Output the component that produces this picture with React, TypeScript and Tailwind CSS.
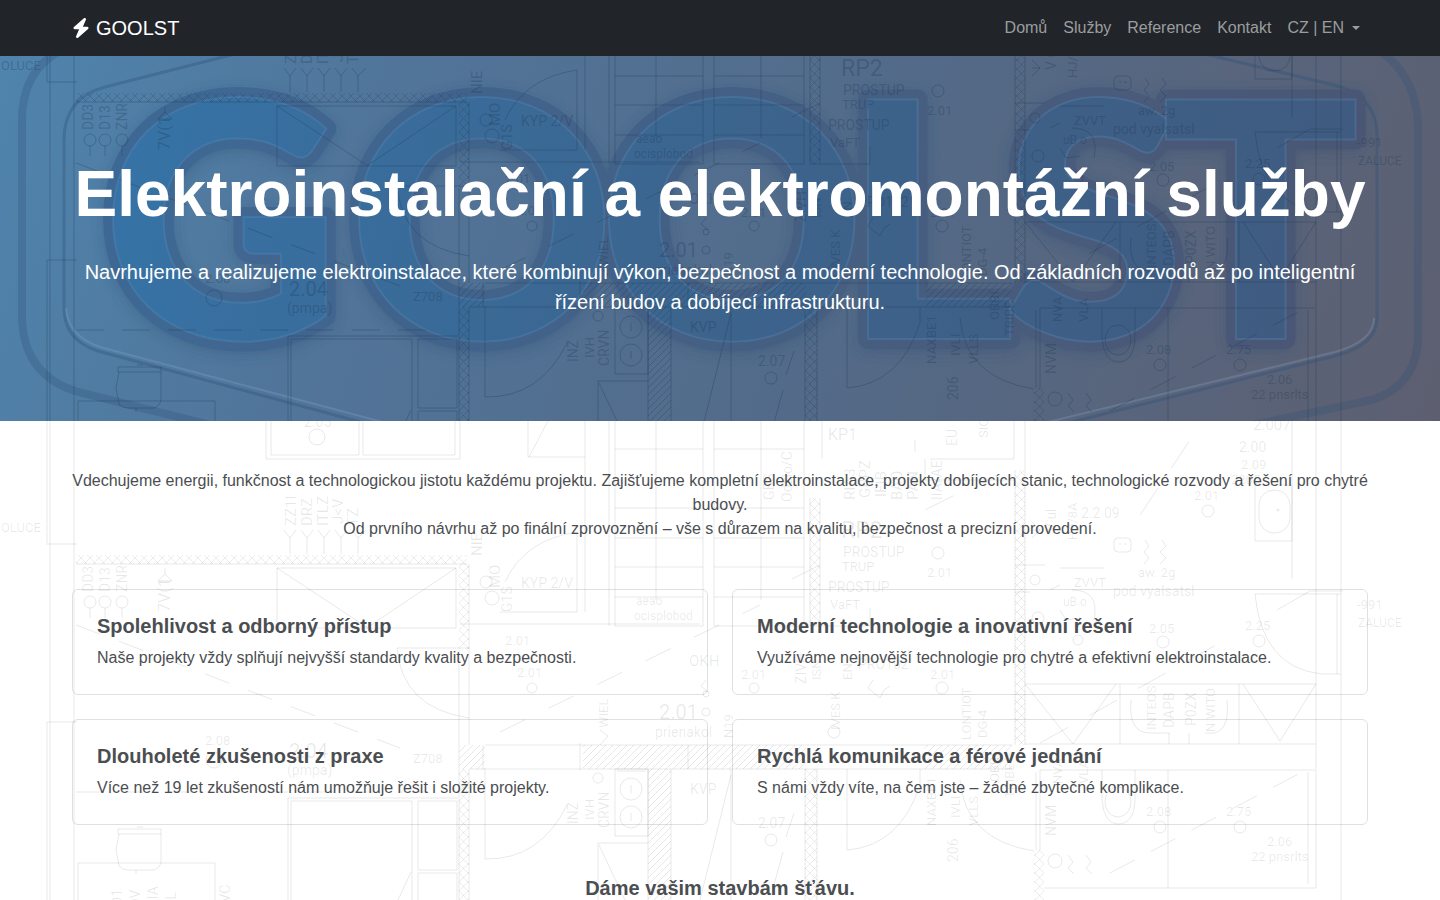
import React from "react";
import { FaBolt } from "react-icons/fa6";

const navLinks = [
  { label: "Domů", href: "#domu" },
  { label: "Služby", href: "#sluzby" },
  { label: "Reference", href: "#reference" },
  { label: "Kontakt", href: "#kontakt" },
];

const features = [
  {
    title: "Spolehlivost a odborný přístup",
    text: "Naše projekty vždy splňují nejvyšší standardy kvality a bezpečnosti.",
  },
  {
    title: "Moderní technologie a inovativní řešení",
    text: "Využíváme nejnovější technologie pro chytré a efektivní elektroinstalace.",
  },
  {
    title: "Dlouholeté zkušenosti z praxe",
    text: "Více než 19 let zkušeností nám umožňuje řešit i složité projekty.",
  },
  {
    title: "Rychlá komunikace a férové jednání",
    text: "S námi vždy víte, na čem jste – žádné zbytečné komplikace.",
  },
];

// x, y, size, text
const labels: [number, number, number, string][] = [
  [1, 532, 13, "OLUCE"],
  [304, 427, 14, "2.05"],
  [521, 588, 14, "KYP 2/V"],
  [636, 605, 12, "aeao"],
  [634, 620, 12, "ocisplobod"],
  [828, 440, 16, "KP1"],
  [841, 538, 23, "RP2"],
  [843, 557, 14, "PROSTUP"],
  [842, 571, 13, "TRUP"],
  [828, 592, 14, "PROSTUP"],
  [830, 609, 13, "VaFT"],
  [927, 577, 13, "2.01"],
  [505, 645, 13, "2.01"],
  [517, 677, 13, "2.01"],
  [741, 679, 13, "2.01"],
  [930, 679, 13, "2.01"],
  [689, 666, 15, "OKH"],
  [858, 669, 14, "PRO102"],
  [659, 719, 20, "2.01"],
  [655, 737, 14, "prienakol"],
  [690, 794, 14, "KVP"],
  [758, 828, 14, "2.07"],
  [205, 745, 13, "2.08"],
  [289, 758, 20, "2.04"],
  [287, 775, 14, "(pmpa)"],
  [413, 763, 13, "Z708"],
  [1253, 430, 15, "2.007"],
  [1239, 452, 14, "2.00"],
  [1241, 469, 13, "2.09"],
  [1231, 484, 13, "2205"],
  [1194, 500, 13, "2.01"],
  [1081, 518, 14, "2.2 09"],
  [1074, 587, 13, "ZVVT"],
  [1063, 606, 12, "uB o"],
  [1138, 577, 13, "aw. 2g"],
  [1113, 596, 14, "pod vyalsatsl"],
  [1149, 633, 13, "2.05"],
  [1245, 630, 13, "2.25"],
  [1357, 609, 13, "-991"],
  [1358, 627, 12, "ZALUCE"],
  [1146, 816, 13, "2.08"],
  [1226, 816, 13, "2.75"],
  [1267, 846, 13, "2.06"],
  [1251, 861, 13, "22 pnsrlts"],
];

// x, y, size, text of the labels that run up the sheet
const sideLabels: [number, number, number, string][] = [
  [296, 526, 15, "ZZ1I"],
  [312, 526, 15, "DRZ"],
  [328, 526, 15, "ITLZ"],
  [343, 524, 15, "J<V"],
  [358, 526, 15, "TZ"],
  [93, 592, 14, "DD3"],
  [110, 592, 14, "D13"],
  [127, 592, 14, "ZNR"],
  [170, 612, 16, "7V(1"],
  [482, 556, 15, "NIE"],
  [500, 588, 15, "MO"],
  [512, 612, 14, "G1S"],
  [792, 502, 14, "Odzlo/C"],
  [774, 500, 14, "GBS"],
  [855, 500, 15, "RIA3"],
  [870, 498, 15, "GBPZ"],
  [886, 497, 15, "IEIB"],
  [902, 500, 15, "BAO"],
  [918, 500, 15, "PAN"],
  [942, 500, 14, "IIA/AE"],
  [957, 446, 14, "EU"],
  [988, 438, 13, "SIO"],
  [608, 728, 13, "WIEL"],
  [733, 738, 13, "N19"],
  [806, 684, 14, "ZIVH"],
  [821, 680, 13, "ISN"],
  [840, 730, 13, "IVES K"],
  [852, 680, 13, "EN"],
  [971, 740, 13, "LONTIOT"],
  [987, 738, 13, "DG-4"],
  [578, 824, 14, "INZ"],
  [594, 820, 13, "IVH"],
  [609, 828, 14, "CRVN"],
  [936, 826, 13, "NAXBE1"],
  [958, 862, 14, "206"],
  [960, 818, 13, "IVLI"],
  [978, 826, 13, "VLLS"],
  [999, 782, 13, "OBBI"],
  [1014, 798, 13, "TRIBE"],
  [1056, 532, 14, "V ul"],
  [1077, 540, 13, "HJ/8A"],
  [1156, 730, 13, "INTEOS"],
  [1174, 728, 14, "DAPB"],
  [1196, 726, 14, "P0ZX"],
  [1215, 732, 13, "N WITO"],
  [1056, 836, 14, "NVM"],
  [1062, 784, 13, "NVA"],
  [1088, 784, 13, "VLA"],
  [122, 906, 14, "D1"],
  [140, 908, 14, "OV"],
  [158, 908, 14, "BIA"],
  [176, 908, 14, "TL"],
  [230, 912, 14, "OVC"],
];

const circles: [number, number, number][] = [
  [317, 437, 8],
  [214, 760, 8],
  [532, 688, 5],
  [754, 688, 5],
  [942, 688, 6],
  [598, 778, 5],
  [631, 789, 11],
  [631, 817, 11],
  [771, 840, 6],
  [1208, 511, 6],
  [1163, 642, 6],
  [1259, 641, 6],
  [1160, 827, 6],
  [1240, 827, 6],
  [1055, 861, 7],
  [938, 553, 6],
  [90, 602, 6],
  [105, 602, 6],
  [122, 602, 6],
  [706, 694, 3],
  [706, 712, 4],
  [486, 582, 6],
  [492, 598, 7],
  [834, 732, 6],
  [1038, 618, 6],
  [1035, 580, 5],
  [1078, 640, 5],
];

const Blueprint = ({ id, viewBox, className }: { id: string; viewBox: string; className: string }) => {
  return (
    <svg
      viewBox={viewBox}
      preserveAspectRatio="xMidYMin slice"
      className={`pointer-events-none absolute inset-0 h-full w-full ${className}`}
      fill="none"
      stroke="currentColor"
      aria-hidden="true"
    >
      <defs>
        <pattern id={`${id}-hatch`} width="7" height="7" patternUnits="userSpaceOnUse">
          <path d="M-1 8L8 -1M-1 1L1 -1M6 8L8 6" />
        </pattern>
        <pattern id={`${id}-cross`} width="9" height="9" patternUnits="userSpaceOnUse">
          <path d="M0 0L9 9M9 0L0 9" strokeWidth="0.8" />
        </pattern>
      </defs>

      {/* walls */}
      <g stroke="none">
        <path d="M76 555H467V564H76zM459 564H469V650H459zM810 498H820V626H810zM1015 470H1025V745H1015z" fill={`url(#${id}-cross)`} />
        <path d="M459 769H469V960H459zM805 769H817V960H805zM1034 850H1044V960H1034z" fill={`url(#${id}-cross)`} />
        <path d="M459 745H485V769H459zM583 745H806V769H583zM925 745H1012V769H925zM648 769H671V960H648z" fill={`url(#${id}-hatch)`} />
      </g>
      <path d="M50 421V960M74 421V960M47 421V545M48 544H77M47 960V722H77" />
      <path d="M76 564H467M469 564V745M459 650V960M469 769V960M460 624H700M585 421V612M577 532V612H500M609 421V626" />
      <path d="M485 745H1012M470 769H1012M483 745V769M580 743V770M688 745V769M648 769V960M671 769V960M805 769V960M817 769V960" />
      <path d="M810 498V626H870V608M820 498V626M822 421V459M1015 470V745M1025 421V745M1014 421V459H930M925 459V480H1014" />
      <path d="M1292 421V579M1316 421V769M1341 421V960M1255 594H1341M1255 594Q1262 668 1322 674H1341M1337 594V674M1277 610L1310 591H1343" />

      {/* rooms and furniture */}
      <path d="M266 421V459H460V421M271 421V455H359V421M363 421V455H455V421" />
      <path d="M277 568H456V628H277zM277 568L368 628M456 568L368 627" />
      <path d="M288 960V798H458M291 960V801H412V960M418 801H457V870H418zM418 960V873H457V960M411 872L398 900" />
      <path d="M118 829H161V834H118zM119 834L116 850L119 866Q122 870 128 870H154Q160 868 161 862V834M137 827H143M136 870V874" />
      <path d="M78 960V863H215V960" />
      <path d="M397 648H470M397 648Q402 708 469 718" />
      <path d="M528 421V457H585M529 457L548 421M505 582Q524 540 577 532" />
      <path d="M615 421V626M656 421V600M703 421V626M714 421V626M761 421V600M804 421V626" />
      <path d="M615 449H703M714 449H804M615 508H703M714 508H804M615 538H703M714 538H804M615 567H703M714 567H804M615 597H703M714 597H804M615 626H703M714 626H804" />
      <path d="M615 769H648V836H615zM617 771H646M631 785V793M631 813V821M598 960V843H648M599 845L625 900M485 769V859Q540 860 567 805" />
      <path d="M731 769V960M731 775L700 900M794 813L786 837M783 852L774 885M847 769V850Q900 846 920 785V769" />
      <path d="M960 780Q965 840 1034 851M1040 850V770H1316V888H1044M1036 772V850M1308 772V884M1168 770V888" />
      <path d="M1102 770V800Q1104 824 1118 824Q1134 824 1135 800V770" />
      <ellipse cx="1118" cy="802" rx="13" ry="15" />
      <path d="M1255 485H1292V541H1255z" />
      <rect x="1259" y="490" width="31" height="43" rx="15" />
      <circle cx="1278" cy="510" r="1" />
      <path d="M1025 684H1316M1025 744H1316M1025 684L1073 744L1116 684M1120 684V744M1239 684V744M1243 684L1280 741L1316 684" />
      <path d="M1131 700Q1128 733 1150 733H1170M1205 733H1215Q1230 728 1227 700M1169 733V744M1189 733V744M1015 565H1045M1060 568H1104M1015 592H1030" />
      <rect x="1114" y="538" width="17" height="14" rx="4" />
      <path d="M1119 544H1121M1124 544H1127" />

      {/* wiring */}
      <path d="M76 792H440" strokeDasharray="28 18" />
      <path d="M76 625L400 748" strokeDasharray="26 20" />
      <path d="M500 732L760 605" strokeDasharray="28 26" />
      <path d="M1110 873L1306 770" strokeDasharray="28 18" />
      <path d="M1040 743L1225 640M1140 515L1200 425M925 510L955 495M792 579L820 565" strokeDasharray="32 24" />
      <path d="M290 554V538L284 530M307 554V538L301 530M324 554V538L318 530M341 554V538L335 530M358 554V538L352 530M290 538L296 530M307 538L313 530M324 538L330 530M341 538L347 530M358 538L366 530" />
      <path d="M90 608V618M105 608V618M122 608V618M165 568V574L158 581H172L165 574" />
      <path d="M1145 540L1149 546L1144 552L1149 558L1144 564M1162 540L1166 546L1160 552L1166 558L1160 564M1072 590Q1100 590 1094 620M1050 590L1060 585M1060 610L1066 620L1080 618" />
      <path d="M1068 855L1073 862L1068 868L1074 874M1086 855L1091 862L1086 868L1092 874M706 680L701 686L708 692M873 680L868 688L880 698L884 690L890 686M915 440V452M600 730L608 736L600 745M1040 530L1032 522M1040 530L1032 538M1032 530H1040" />
      {circles.map(([cx, cy, r]) => (
        <circle key={`${cx}-${cy}`} cx={cx} cy={cy} r={r} />
      ))}

      <g fill="currentColor" stroke="none" fontFamily="Roboto, 'Liberation Sans', sans-serif">
        {labels.map(([x, y, size, text]) => (
          <text key={`${x}-${y}`} x={x} y={y} fontSize={size}>
            {text}
          </text>
        ))}
        {sideLabels.map(([x, y, size, text]) => (
          <text key={`${x}-${y}`} transform={`translate(${x} ${y}) rotate(-90)`} fontSize={size}>
            {text}
          </text>
        ))}
      </g>
    </svg>
  );
};

const HeroBackdrop = () => {
  return (
    <svg
      viewBox="0 56 1440 365"
      preserveAspectRatio="xMidYMin slice"
      className="pointer-events-none absolute inset-0 h-full w-full"
      fill="none"
      aria-hidden="true"
    >
      <defs>
        <linearGradient id="letter" gradientUnits="userSpaceOnUse" x1="100" y1="56" x2="1345" y2="400">
          <stop offset="0" stopColor="#3674a8" />
          <stop offset="0.5" stopColor="#3c648d" />
          <stop offset="1" stopColor="#405a7f" />
        </linearGradient>
        <linearGradient id="edge" gradientUnits="userSpaceOnUse" x1="100" y1="56" x2="1345" y2="400">
          <stop offset="0" stopColor="#3d6996" />
          <stop offset="0.5" stopColor="#446085" />
          <stop offset="1" stopColor="#4b5672" />
        </linearGradient>
        <filter id="shadow" x="-5%" y="-20%" width="110%" height="140%">
          <feDropShadow dx="0" dy="3" stdDeviation="7" floodColor="#29486f" floodOpacity="0.35" />
        </filter>
      </defs>

      {/* bevelled plate */}
      <path
        d="M90 40Q22 55 22 120V315Q22 375 78 392L330 455H1110L1372 400Q1418 385 1418 335V130Q1418 65 1360 40"
        stroke="#2f5078"
        strokeOpacity="0.28"
        strokeWidth="8"
      />
      <path
        d="M235 54L105 87Q64 98 64 140V308Q64 340 98 351L390 430H1040L1335 356Q1377 345 1377 318V135Q1377 98 1338 86L1205 54"
        stroke="#2c4f7c"
        strokeOpacity="0.35"
        strokeWidth="3"
      />
      <path
        d="M66 308Q68 336 100 347L390 424H1040L1335 352Q1374 341 1374 318"
        stroke="#8eaed0"
        strokeOpacity="0.25"
        strokeWidth="2"
      />

      <g fontFamily="Lato, 'Liberation Sans', sans-serif" fontWeight="900" fontSize="330" strokeLinejoin="round">
        <text x="102 348 598 843 1003 1161" y="339" fill="url(#edge)" stroke="url(#edge)" strokeWidth="20" filter="url(#shadow)">
          GOOLST
        </text>
        <text x="102 348 598 843 1003 1161" y="339" fill="url(#letter)" stroke="#5e96c8" strokeOpacity="0.25" strokeWidth="2">
          GOOLST
        </text>
      </g>
    </svg>
  );
};

const Navbar = () => {
  return (
    <header className="bg-[#212529]">
      <nav className="mx-auto flex min-h-14 max-w-[1320px] flex-wrap items-center justify-between px-3">
        <a href="#domu" className="flex items-center gap-1.5 text-xl leading-[30px] text-white">
          <FaBolt className="h-5 w-[18px]" />
          GOOLST
        </a>
        <ul className="flex flex-wrap items-center text-base text-[#9b9d9f]">
          {navLinks.map((link) => (
            <li key={link.label}>
              <a href={link.href} className="block p-2 hover:text-white">
                {link.label}
              </a>
            </li>
          ))}
          <li>
            <button type="button" aria-haspopup="true" className="flex items-center gap-2 p-2 hover:text-white">
              CZ | EN
              <svg viewBox="0 0 8 4" className="w-2" fill="currentColor" aria-hidden="true">
                <path d="M0 0H8L4 4z" />
              </svg>
            </button>
          </li>
        </ul>
      </nav>
    </header>
  );
};

const Hero = () => {
  return (
    <section className="relative overflow-hidden bg-[linear-gradient(110deg,#4f84ad_0%,#51759a_25%,#536a88_60%,#5d5f70_100%)] pt-[100px] pb-[104px] text-center text-white">
      <HeroBackdrop />
      <Blueprint id="hero" viewBox="0 518 1440 365" className="text-[#1d3654]/30" />
      <div className="relative mx-auto max-w-[1320px] px-3">
        <h1 className="mb-6 text-[64px] leading-[77px] font-bold">Elektroinstalační a elektromontážní služby</h1>
        <p className="text-xl leading-[30px]">
          Navrhujeme a realizujeme elektroinstalace, které kombinují výkon, bezpečnost a moderní technologie. Od
          základních rozvodů až po inteligentní řízení budov a dobíjecí infrastrukturu.
        </p>
      </div>
    </section>
  );
};

const About = () => {
  return (
    <main className="relative overflow-hidden bg-white py-12">
      <Blueprint id="about" viewBox="0 421 1440 530" className="text-black/9" />
      <div className="relative mx-auto max-w-[1320px] px-3">
        <p className="mb-12 text-center text-base">
          Vdechujeme energii, funkčnost a technologickou jistotu každému projektu. Zajišťujeme kompletní
          elektroinstalace, projekty dobíjecích stanic, technologické rozvody a řešení pro chytré budovy.
          <br />
          Od prvního návrhu až po finální zprovoznění – vše s důrazem na kvalitu, bezpečnost a precizní provedení.
        </p>
        <div className="grid gap-6 md:grid-cols-2">
          {features.map((feature) => (
            <article key={feature.title} className="rounded-md border border-black/12 p-6">
              <h2 className="mb-2 text-xl leading-6 font-bold">{feature.title}</h2>
              <p className="text-base">{feature.text}</p>
            </article>
          ))}
        </div>
        <p className="mt-12 text-center text-xl leading-[30px] font-bold">Dáme vašim stavbám šťávu.</p>
      </div>
    </main>
  );
};

const App = () => {
  return (
    <div className="font-['Liberation_Sans',Arial,sans-serif] text-[#4b4e51]">
      <Navbar />
      <Hero />
      <About />
    </div>
  );
};

export default App;
